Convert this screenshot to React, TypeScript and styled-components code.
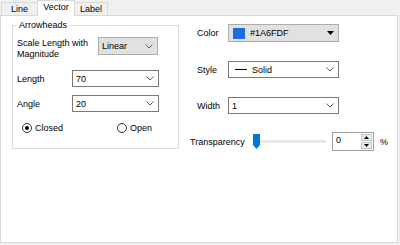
import styled, { createGlobalStyle } from "styled-components";

const GlobalStyle = createGlobalStyle`
  html, body {
    margin: 0;
    padding: 0;
    background: #f0f0f0;
  }
  body {
    width: 400px;
    height: 245px;
    overflow: hidden;
    font: 9px "Liberation Sans", Arial, sans-serif;
    color: #000;
  }
`

const Chevron = () => (
    <svg width="8" height="5" viewBox="0 0 8 5">
        <path d="M0.5 0.5 L4 4 L7.5 0.5" fill="none" stroke="#606060" strokeWidth="1"/>
    </svg>
)

const DropTriangle = () => (
    <svg width="7" height="4" viewBox="0 0 7 4">
        <path d="M0 0 H7 L3.5 4 Z" fill="#000"/>
    </svg>
)

function App() {
    return (
        <Window>
            <GlobalStyle/>
            <TabStrip>
                <Tab $w={37}>Line</Tab>
                <Tab $w={38} $active>Vector</Tab>
                <Tab $w={34}>Label</Tab>
            </TabStrip>
            <Panel>
                <GroupBox>
                    <Legend>Arrowheads</Legend>
                    <GroupBody>
                        <ScaleRow>
                            <WrapLabel>Scale Length with<br/>Magnitude</WrapLabel>
                            <Combo $w={60} $h={18} $flat>
                                <ComboText>Linear</ComboText>
                                <Chevron/>
                            </Combo>
                        </ScaleRow>
                        <FormRow $top={10}>
                            <RowLabel $w={55}>Length</RowLabel>
                            <Combo $w={87} $h={17}>
                                <ComboText>70</ComboText>
                                <Chevron/>
                            </Combo>
                        </FormRow>
                        <FormRow $top={8}>
                            <RowLabel $w={55}>Angle</RowLabel>
                            <Combo $w={87} $h={17}>
                                <ComboText>20</ComboText>
                                <Chevron/>
                            </Combo>
                        </FormRow>
                        <RadioRow>
                            <RadioItem $w={95}>
                                <RadioCircle $checked/>
                                Closed
                            </RadioItem>
                            <RadioItem>
                                <RadioCircle/>
                                Open
                            </RadioItem>
                        </RadioRow>
                    </GroupBody>
                </GroupBox>

                <RightColumn>
                    <FieldRow $top={0} $indent={7}>
                        <RowLabel $w={31}>Color</RowLabel>
                        <Combo $w={111} $h={18} $flat>
                            <ColorValue>
                                <Swatch/>
                                #1A6FDF
                            </ColorValue>
                            <DropTriangle/>
                        </Combo>
                    </FieldRow>
                    <FieldRow $top={19} $indent={7}>
                        <RowLabel $w={31}>Style</RowLabel>
                        <Combo $w={111} $h={17}>
                            <ColorValue>
                                <LineSample/>
                                Solid
                            </ColorValue>
                            <Chevron/>
                        </Combo>
                    </FieldRow>
                    <FieldRow $top={19} $indent={7}>
                        <RowLabel $w={31}>Width</RowLabel>
                        <Combo $w={111} $h={17}>
                            <ComboText>1</ComboText>
                            <Chevron/>
                        </Combo>
                    </FieldRow>
                    <FieldRow $top={18} $indent={0}>
                        <RowLabel $w={63}>Transparency</RowLabel>
                        <Slider>
                            <svg width="7" height="15" viewBox="0 0 7 15">
                                <path d="M0 0 H7 V11 L3.5 15 L0 11 Z" fill="#0078d7"/>
                            </svg>
                        </Slider>
                        <Spin>
                            <SpinValue>0</SpinValue>
                            <SpinButtons>
                                <SpinButton>
                                    <svg width="5" height="3" viewBox="0 0 5 3"><path d="M0 3 H5 L2.5 0 Z" fill="#000"/></svg>
                                </SpinButton>
                                <SpinButton>
                                    <svg width="5" height="3" viewBox="0 0 5 3"><path d="M0 0 H5 L2.5 3 Z" fill="#000"/></svg>
                                </SpinButton>
                            </SpinButtons>
                        </Spin>
                        <Percent>%</Percent>
                    </FieldRow>
                </RightColumn>
            </Panel>
        </Window>
    )
}

export default App

const Window = styled.div`
    width: 400px;
    height: 245px;
    background: #f0f0f0;
`

const TabStrip = styled.div`
    display: flex;
    align-items: flex-end;
    height: 15px;
    padding-left: 1px;
`

const Tab = styled.div<{ $active?: boolean, $w: number }>`
    position: relative;
    box-sizing: border-box;
    width: ${p => p.$w}px;
    height: ${p => p.$active ? 16 : 13}px;
    margin-right: -1px;
    margin-bottom: ${p => p.$active ? -1 : 0}px;
    border: 1px solid #d9d9d9;
    border-bottom: none;
    background: ${p => p.$active ? '#fff' : '#f0f0f0'};
    z-index: ${p => p.$active ? 1 : 0};
    text-align: center;
    line-height: ${p => p.$active ? 13 : 12}px;
    font-size: 9px;
`

const Panel = styled.div`
    box-sizing: border-box;
    width: 398px;
    height: 228px;
    border: 1px solid #d9d9d9;
    background: #fff;
    display: flex;
    align-items: flex-start;
    padding: 3px 0 0 11px;
`

const GroupBox = styled.fieldset`
    box-sizing: border-box;
    width: 167px;
    height: 130px;
    margin: 0;
    padding: 0;
    min-width: 0;
    border: 1px solid #dcdcdc;
`

const Legend = styled.legend`
    margin-left: 4px;
    padding: 0 2px;
    line-height: 12px;
    font-size: 9px;
`

const GroupBody = styled.div`
    display: flex;
    flex-direction: column;
    padding: 6px 0 0 4px;
`

const ScaleRow = styled.div`
    display: flex;
    align-items: flex-start;
    height: 23px;
`

const WrapLabel = styled.div`
    width: 81px;
    margin-top: 1px;
    line-height: 11px;
`

const FormRow = styled.div<{ $top: number }>`
    display: flex;
    align-items: center;
    margin-top: ${p => p.$top}px;
`

const RowLabel = styled.div<{ $w: number }>`
    width: ${p => p.$w}px;
    flex-shrink: 0;
    white-space: nowrap;
`

const Combo = styled.div<{ $w: number, $h: number, $flat?: boolean }>`
    box-sizing: border-box;
    width: ${p => p.$w}px;
    height: ${p => p.$h}px;
    display: flex;
    align-items: center;
    justify-content: space-between;
    padding: 0 4px 0 3px;
    border: 1px solid ${p => p.$flat ? '#adadad' : '#7a7a7a'};
    background: ${p => p.$flat ? '#e1e1e1' : '#fff'};
`

const ComboText = styled.span`
    white-space: nowrap;
`

const ColorValue = styled.span`
    display: flex;
    align-items: center;
    gap: 5px;
    padding-left: 1px;
`

const Swatch = styled.span`
    display: block;
    width: 12px;
    height: 11px;
    background: #1a6fdf;
`

const LineSample = styled.span`
    display: block;
    width: 12px;
    height: 1px;
    margin-left: 2px;
    background: #000;
`

const RadioRow = styled.div`
    display: flex;
    align-items: center;
    margin-top: 10px;
    padding-left: 5px;
    height: 12px;
`

const RadioItem = styled.label<{ $w?: number }>`
    display: flex;
    align-items: center;
    gap: 3px;
    width: ${p => p.$w ? `${p.$w}px` : 'auto'};
`

const RadioCircle = styled.span<{ $checked?: boolean }>`
    box-sizing: border-box;
    width: 10px;
    height: 10px;
    border-radius: 50%;
    border: 1px solid #333;
    display: flex;
    align-items: center;
    justify-content: center;

    &::after {
        content: "";
        display: ${p => p.$checked ? 'block' : 'none'};
        width: 4px;
        height: 4px;
        border-radius: 50%;
        background: #000;
    }
`

const RightColumn = styled.div`
    display: flex;
    flex-direction: column;
    margin-left: 11px;
    padding-top: 5px;
`

const FieldRow = styled.div<{ $top: number, $indent: number }>`
    display: flex;
    align-items: center;
    margin-top: ${p => p.$top}px;
    padding-left: ${p => p.$indent}px;
`

const Slider = styled.div`
    display: flex;
    align-items: flex-start;
    width: 73px;
    height: 17px;
    padding-top: 1px;
    box-sizing: border-box;
    background: linear-gradient(#e7e7e7, #e7e7e7) no-repeat 2px 7px / 71px 3px;
`

const Spin = styled.div`
    box-sizing: border-box;
    display: flex;
    justify-content: space-between;
    width: 42px;
    height: 19px;
    margin-left: 6px;
    border: 1px solid #a0a0a0;
    background: #fff;
`

const SpinValue = styled.span`
    padding: 2px 0 0 3px;
`

const SpinButtons = styled.div`
    display: flex;
    flex-direction: column;
    gap: 1px;
    padding: 1px;
`

const SpinButton = styled.div`
    box-sizing: border-box;
    width: 11px;
    height: 7px;
    display: flex;
    align-items: center;
    justify-content: center;
    background: #ececec;
    border: 1px solid #c8c8c8;
`

const Percent = styled.span`
    margin-left: 6px;
`
